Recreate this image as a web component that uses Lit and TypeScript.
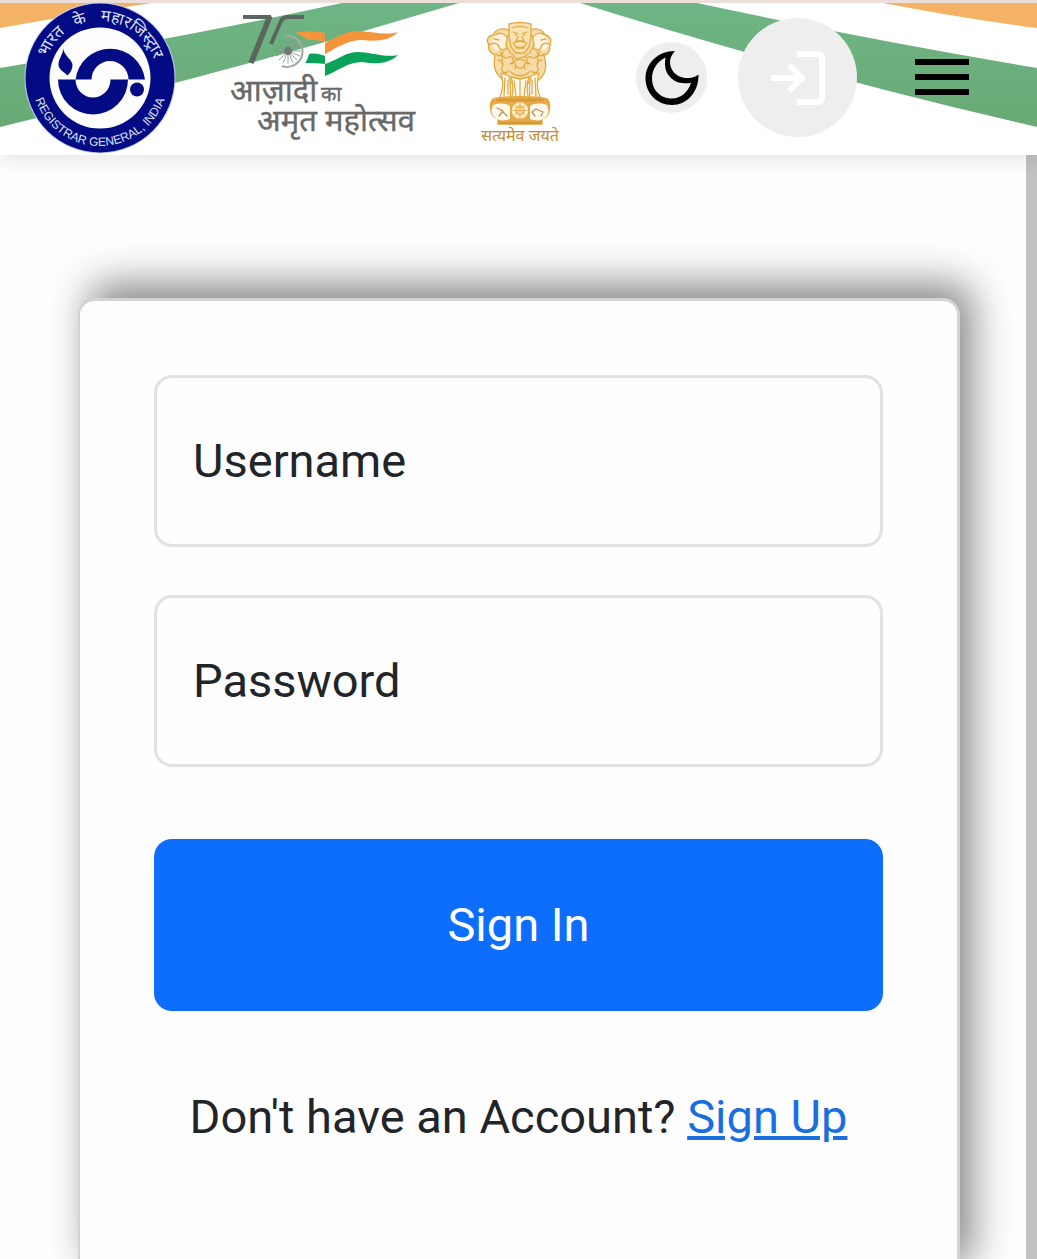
import { LitElement, html, css, svg } from "lit";
import { customElement, state } from "lit/decorators.js";

@customElement("registrar-seal")
class RegistrarSeal extends LitElement {
  static styles = css`
    :host { display: block; }
    svg { display: block; width: 152px; height: 150px; overflow: visible; }
    .hindi { font: 16px "Noto Sans", sans-serif; fill: #dfe1f5; }
    .latin { font: 12px "Liberation Sans", Arial, sans-serif; fill: #dfe1f5; }
  `;
  render() {
    return html`<svg viewBox="0 1 152 150" role="img" aria-label="Registrar General, India">
      <defs>
        <path id="top" d="M19 76a57 57 0 0 1 114 0" />
        <path id="bottom" d="M8 76a68 68 0 0 0 136 0" />
      </defs>
      <circle cx="76" cy="76" r="75.5" fill="#c9cdea" />
      <circle cx="76" cy="76" r="74.5" fill="#020b84" />
      <circle cx="76" cy="76" r="50.5" fill="#fdfdfe" />
      <text class="hindi"><textPath href="#top" startOffset="21">भारत</textPath></text>
      <text class="hindi"><textPath href="#top" startOffset="64">के</textPath></text>
      <text class="hindi"><textPath href="#top" startOffset="90">महारजिस्ट्रार</textPath></text>
      <text class="latin" text-anchor="middle"><textPath href="#bottom" startOffset="50%">REGISTRAR GENERAL, INDIA</textPath></text>
      <g fill="#020b84">
        <path d="M51.500 77.500a35 35 0 0 1 69.500 0h-16.500a18.500 18.500 0 0 0-37 0z" />
        <path d="M34 77.500h17.500a17.500 18 0 0 0 35 0h17.500a35 35 0 0 1-70 0z" />
        <circle cx="113" cy="87.500" r="7" />
        <path d="M39.500 46.500c-1 7-5 10-5 16 0 5 5 7 9 11 3-3 5-6 5-11-1-6-9-9-9-16z" />
      </g>
    </svg>`;
  }
}

@customElement("mahotsav-logo")
class MahotsavLogo extends LitElement {
  static styles = css`
    :host { display: block; }
    svg { display: block; width: 192px; height: 136px; overflow: visible; }
    text { font-family: "Noto Sans", sans-serif; fill: #686868; stroke: #686868; stroke-width: .4; }
    .big { font-size: 31px; }
    .small { font-size: 20px; }
  `;
  render() {
    const spokes = Array.from({ length: 16 }, (_, i) => {
      const a = (i * Math.PI) / 8;
      return svg`<path d="M60 44L${60 + 13 * Math.cos(a)} ${44 + 13 * Math.sin(a)}" />`;
    });
    return html`<svg viewBox="0 0 192 136" role="img" aria-label="75 आज़ादी का अमृत महोत्सव">
      <g fill="none" stroke="#5c6661" stroke-width="4">
        <path d="M15 10h28" />
        <path d="M42 9L23 56" stroke-width="5.500" />
        <path d="M76 10H60q-5 0-7 4L43 37" />
      </g>
      <g stroke="#84908a" stroke-width=".8" fill="none">
        ${spokes}
        <path d="M57 29a15.500 15.500 0 1 1-3 30" stroke="#a2aaa5" stroke-width="2" />
      </g>
      <circle cx="60" cy="44" r="4" fill="#707973" />
      <path d="M67 26c9-2 20-2 30 0v10c10-5 20-12 32-12 14 0 28 5 41 1-8 8-20 10-36 8-14 0-24 7-37 14V35c-7-2-10-2-17-2-3-3-7-4-13-7z" fill="#f5943b" />
      <path d="M81 47c6-1 11 0 16 2v8c11-3 20-12 32-12 14 0 28 6 41 3-8 8-20 10-36 7-14 0-24 9-37 14V57c-7-1-13-1-20-1 2-3 3-5 4-9z" fill="#0ba35a" />
      <text class="big" x="2" y="94">आज़ादी</text>
      <text class="small" x="93" y="94">का</text>
      <text class="big" x="29" y="124">अमृत महोत्सव</text>
    </svg>`;
  }
}

@customElement("state-emblem")
class StateEmblem extends LitElement {
  static styles = css`
    :host { display: block; }
    svg { display: block; width: 80px; height: 128px; overflow: visible; }
    text { font: 16px "Noto Sans", sans-serif; fill: #c58a35; }
  `;
  render() {
    return html`<svg viewBox="0 0 80 128" role="img" aria-label="सत्यमेव जयते">
      <g fill="none" stroke="#e3aa43" stroke-width="1.300" stroke-linecap="round" stroke-linejoin="round">
        <path fill="#f5dba6" d="M29 8c-8-3-14 0-16 5-6 1-7 6-4 10-2 5 3 9 6 10-2 12 0 18 6 23l5 5h29l6-5c5-6 6-12 3-23 5-1 7-6 5-10 4-4 1-9-4-10-2-5-8-8-15-5z" />
        <path fill="#fdf3de" stroke="none" d="M15 13q8-5 12 1l-2 11-9 4-6-7z M65 13q-8-5-12 1l2 11 9 4 6-7z" />
        <path d="M15 13c4-3 9-2 12 2M9 23c4-3 9-2 10 2s5 4 8 1M14 17l5 1M16 32c3 3 6 2 7-2M65 13c-4-3-9-2-12 2M71 23c-4-3-9-2-10 2s-5 4-8 1M66 17l-5 1M64 32c-3 3-6 2-7-2" />
        <path fill="#f9e3b4" d="M29 2q11-3 22 0v12l-2 11-5 6h-8l-5-6-2-11z" />
        <path d="M32 6c5-2 11-2 16 0M33 10l5 2M47 10l-5 2M35 13h1M44 13h1M38 14l-2 5h8l-2-5M33 21c4-2 10-2 14 0-2 6-12 6-14 0zM28 13l-2 10 5 9M52 13l2 10-5 9M36 26h8" />
        <path d="M20 30c3 6 6 7 9 5s6 4 3 7M60 30c-3 6-6 7-9 5s-6 4-3 7M18 38c4 0 6 4 4 8s4 6 7 3M62 38c-4 0-6 4-4 8s-4 6-7 3M33 32c1 5 4 6 7 4s6 1 7-4M30 42c4-4 7 0 5 5M50 42c-4-4-7 0-5 5M35 39c3-2 7-2 10 0M36 44c2 3 6 3 8 0M31 50c4 5 14 5 18 0M23 51l7 4M57 51l-7 4M22 34c2 4-2 6 1 9M58 34c-2 4 2 6-1 9" />
        <path fill="#fffaf0" d="M21 51c3 10 1 20-2 26h11c1-9 1-16-1-23zM31 55c3 8 2 16 0 23h9V57zM49 55c-3 8-2 16 0 23h-9V57zM59 51c-3 10-1 20 2 26H50c-1-9-1-16 1-23z" />
        <path d="M25 56l-1 18M28 58v14M34 59l2 15M46 59l-2 15M52 58v14M55 56l1 18M29 76h4M47 76h4" />
        <path fill="#e4aa47" d="M13 77c9-3 45-3 54 0 3 3 3 8 2 12-1 5-4 7-7 8v5H18v-5c-3-1-6-3-7-8-1-4-1-9 2-12z" />
        <path fill="#fff8e9" stroke="none" d="M13 83c6-2 12-2 17 1v13c-5 2-11 2-15-1-4-4-4-8-2-13zM67 83c-6-2-12-2-17 1v13c5 2 11 2 15-1 4-4 4-8 2-13z" />
        <circle cx="40" cy="88.500" r="9" fill="#faeac8" />
        <circle cx="40" cy="88.500" r="4" />
        <path d="M40 80v17M31 88.500h18M34 82l12 12M46 82L34 94" stroke-width=".7" />
        <path stroke="#b8975c" d="M17 86l6 3-4 5M21 88l6 6M56 87l-4 3 3 4M56 87l7 3-2 4" />
        <path d="M17 78h46M19 101h42" stroke="#d79a35" stroke-width="2.500" />
      </g>
      <text x="40" y="119" text-anchor="middle">सत्यमेव जयते</text>
    </svg>`;
  }
}

@customElement("app-root")
class AppRoot extends LitElement {
  @state() private dark = false;

  static styles = css`
    :host {
      display: flex; flex-direction: column; height: 100vh; overflow: hidden;
      background: #fefefe; color: #212529;
      font-family: Roboto, "Noto Sans", sans-serif; font-size: 47px; line-height: 72px;
    }
    * { box-sizing: border-box; }
    .header {
      position: relative; z-index: 1; flex: none;
      display: flex; align-items: flex-start; justify-content: space-between;
      height: 155px; padding: 0 68px 0 24px;
      border-top: 3px solid #ecdfd9; background: #fff;
      box-shadow: 0 8px 16px rgba(0, 0, 0, .08);
    }
    .stripes { position: absolute; inset: 0; width: 100%; height: 100%; }
    .brands, .actions { position: relative; display: flex; }
    .brands { align-items: flex-start; gap: 52px; }
    .brands mahotsav-logo { padding-top: 4px; }
    .brands state-emblem { padding-top: 19px; margin-left: 8px; }
    .actions { align-items: center; height: 149px; gap: 31px; }
    button { border: 0; padding: 0; font: inherit; cursor: pointer; }
    .round { display: grid; place-items: center; flex: none; border-radius: 50%; background: #eee; }
    .theme { width: 71px; height: 71px; }
    .login { width: 119px; height: 119px; }
    .menu { background: none; margin-left: 27px; }
    .actions svg { display: block; width: 54px; height: 54px; }
    .scroll { flex: 1; min-height: 0; overflow: hidden auto; scrollbar-width: none; padding: 143px 77px 0 78px; }
    .rail { position: absolute; top: 155px; right: 0; bottom: 0; width: 11px; background: #c1c1c1; }
    .card {
      display: flex; flex-direction: column;
      padding: 74px 74px 124px 74px;
      border: solid #d3d3d3; border-width: 3px 3px 3px 2px; border-radius: 17px; background: #fefefe;
      box-shadow: 12px -14px 40px rgba(0, 0, 0, .48);
    }
    .field { display: grid; margin-bottom: 48px; }
    .field label, .field input { grid-area: 1 / 1; }
    .field label { align-self: center; padding-left: 39px; pointer-events: none; }
    .field input {
      width: 100%; height: 172px; padding: 0 36px;
      border: 3px solid #e2e2e2; border-radius: 18px; background: transparent;
      font: inherit; color: inherit;
    }
    .field:has(input:not(:placeholder-shown)) label { visibility: hidden; }
    .submit { height: 172px; margin-top: 24px; border-radius: 18px; background: #0d6efd; color: #fff; }
    .signup { margin: 70px 0 0; text-align: center; }
    .signup a { color: #1a6fe0; }
  `;

  render() {
    return html`
      <header class="header">
        <svg class="stripes" viewBox="0 3 1037 152" preserveAspectRatio="none" aria-hidden="true">
          <defs>
            <linearGradient id="green" x1="0" y1="0" x2="0" y2="1">
              <stop offset="0" stop-color="#6eb585" /><stop offset="1" stop-color="#69aa75" />
            </linearGradient>
          </defs>
          <path d="M0 3h152Q76 14 0 28zM883 3h154v25Q960 18 883 3z" fill="#f4b264" />
          <path d="M0 68Q190 36 342 3h117Q230 72 0 127zM580 3h117Q860 38 1037 68v59Q800 72 580 3z" fill="url(#green)" />
        </svg>
        <div class="brands">
          <registrar-seal></registrar-seal>
          <mahotsav-logo></mahotsav-logo>
          <state-emblem></state-emblem>
        </div>
        <div class="actions">
          <button class="round theme" aria-label="Toggle dark mode" aria-pressed=${this.dark} @click=${() => (this.dark = !this.dark)}>
            <svg viewBox="0 0 54 54"><path fill-rule="evenodd" d="M30 0C13 0 .5 12 .5 27.500.500 42 12 54 27 54c15 0 27-13 26.500-30.500-4 3-9 4-13.500 3.500C31 26 25 19 25 11c0-4 2-8 5-11zM20.500 6.500C19 17 21 22 26 27c5 5 13 6 20 5-3 9-10 15.500-19 15.500C15.500 47.500 7 39 7 27.500 7 18.500 12 10.500 20.500 6.500z" /></svg>
          </button>
          <button class="round login" aria-label="Log in">
            <svg viewBox="0 0 54 54"><path d="M26 3h20q5 0 5 5v38q0 5-5 5H26M0 27h30M18 14l13 13-13 13" fill="none" stroke="#fff" stroke-width="6" /></svg>
          </button>
          <button class="menu" aria-label="Menu">
            <svg viewBox="0 0 54 54"><path d="M0 8h54v6H0zM0 23h54v6H0zM0 38h54v6H0z" /></svg>
          </button>
        </div>
      </header>
      <main class="scroll">
        <form class="card" @submit=${(e: Event) => e.preventDefault()}>
          <div class="field">
            <input id="username" type="text" placeholder=" " autocomplete="username" />
            <label for="username">Username</label>
          </div>
          <div class="field">
            <input id="password" type="password" placeholder=" " autocomplete="current-password" />
            <label for="password">Password</label>
          </div>
          <button class="submit" type="submit">Sign In</button>
          <p class="signup">Don't have an Account? <a href="#signup">Sign Up</a></p>
        </form>
      </main>
      <div class="rail"></div>
    `;
  }
}
